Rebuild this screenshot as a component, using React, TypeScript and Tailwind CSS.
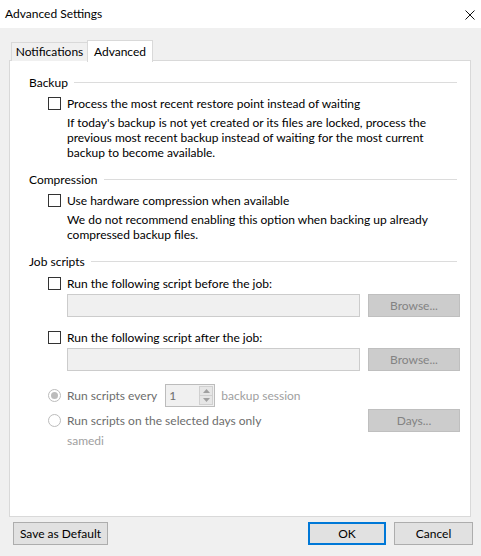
import React from 'react';

const FONT = 'font-["Lato","Liberation_Sans",sans-serif]';

function Checkbox() {
  return <span className="block h-[13px] w-[13px] flex-none border border-[#333333] bg-white" />;
}

function Radio({ checked }: { checked?: boolean }) {
  return (
    <span className="flex h-[13px] w-[13px] flex-none items-center justify-center rounded-full border border-[#bcbcbc] bg-white">
      {checked ? <span className="block h-[7px] w-[7px] rounded-full bg-[#bcbcbc]" /> : null}
    </span>
  );
}

function GroupHeader({ label, mt }: { label: string; mt: string }) {
  return (
    <div className={`${mt} flex h-[15px] items-center pl-[19px] pr-[13px]`}>
      <span className="leading-[15px] text-black">{label}</span>
      <span className="ml-[6px] h-px flex-1 bg-[#dcdcdc]" />
    </div>
  );
}

function Btn({ children, w, disabled, primary }: { children: React.ReactNode; w: string; disabled?: boolean; primary?: boolean }) {
  return (
    <div
      className={`${w} flex h-[23px] flex-none items-center justify-center ${
        disabled
          ? 'border border-[#bfbfbf] bg-[#cccccc] text-[#838383]'
          : primary
            ? 'border-2 border-[#0078d7] bg-[#e1e1e1] text-black'
            : 'border border-[#adadad] bg-[#e1e1e1] text-black'
      }`}
    >
      {children}
    </div>
  );
}

export default function App() {
  return (
    <div className={`${FONT} h-[556px] w-[481px] bg-[#f0f0f0] text-[12px] text-black`}>
      {/* title bar */}
      <div className="flex h-[28px] items-center justify-between bg-white pl-[5px] pr-[6px]">
        <span>Advanced Settings</span>
        <svg width="10" height="10" viewBox="0 0 10 10" className="mt-[1px]">
          <path d="M0.5 0.5 L9.5 9.5 M9.5 0.5 L0.5 9.5" stroke="#111" strokeWidth="1" />
        </svg>
      </div>

      <div className="pl-[9px] pr-[10px]">
        {/* tabs */}
        <div className="relative z-10 mt-[12px] flex h-[21px] items-end pl-[2px]">
          <div className="flex h-[19px] w-[77px] items-center justify-center border border-b-0 border-[#d9d9d9] bg-[#f0f0f0]">Notifications</div>
          <div className="-mb-px -ml-px flex h-[22px] w-[66px] items-start justify-center border border-b-0 border-[#d9d9d9] bg-white pt-[2px]">Advanced</div>
        </div>

        {/* panel */}
        <div className="-mt-px h-[457px] border border-[#d9d9d9] bg-white">
          <GroupHeader label="Backup" mt="mt-[14px]" />
          <div className="mt-[6px] flex h-[15px] items-center pl-[38px]">
            <Checkbox />
            <span className="ml-[6px] leading-[15px]">Process the most recent restore point instead of waiting</span>
          </div>
          <div className="mt-[4px] pl-[57px] leading-[15px]">
            If today's backup is not yet created or its files are locked, process the
            <br />
            previous most recent backup instead of waiting for the most current
            <br />
            backup to become available.
          </div>

          <GroupHeader label="Compression" mt="mt-[12px]" />
          <div className="mt-[6px] flex h-[15px] items-center pl-[38px]">
            <Checkbox />
            <span className="ml-[6px] leading-[15px]">Use hardware compression when available</span>
          </div>
          <div className="mt-[4px] pl-[57px] leading-[15px]">
            We do not recommend enabling this option when backing up already
            <br />
            compressed backup files.
          </div>

          <GroupHeader label="Job scripts" mt="mt-[12px]" />
          <div className="mt-[7px] flex h-[15px] items-center pl-[38px]">
            <Checkbox />
            <span className="ml-[6px] leading-[15px]">Run the following script before the job:</span>
          </div>
          <div className="mt-[3px] flex items-center pl-[57px]">
            <div className="h-[23px] w-[293px] border border-[#cccccc] bg-[#f0f0f0]" />
            <div className="ml-[8px]">
              <Btn w="w-[92px]" disabled>Browse...</Btn>
            </div>
          </div>
          <div className="mt-[13px] flex h-[15px] items-center pl-[38px]">
            <Checkbox />
            <span className="ml-[6px] leading-[15px]">Run the following script after the job:</span>
          </div>
          <div className="mt-[3px] flex items-center pl-[57px]">
            <div className="h-[23px] w-[293px] border border-[#cccccc] bg-[#f0f0f0]" />
            <div className="ml-[8px]">
              <Btn w="w-[92px]" disabled>Browse...</Btn>
            </div>
          </div>

          <div className="mt-[13px] flex h-[23px] items-center pl-[38px]">
            <Radio checked />
            <span className="ml-[6px] text-[#6d6d6d]">Run scripts every</span>
            <div className="ml-[8px] flex h-[23px] w-[50px] items-stretch border border-[#bcbcbc] bg-[#f0f0f0]">
              <span className="flex-1 pl-[3px] leading-[21px] text-[#6d6d6d]">1</span>
              <div className="my-[1px] mr-[1px] flex w-[14px] flex-col">
                <div className="flex flex-1 items-center justify-center border border-[#d0d0d0] bg-[#e6e6e6]">
                  <svg width="7" height="4" viewBox="0 0 7 4"><path d="M0 4 L3.5 0 L7 4 Z" fill="#a0a0a0" /></svg>
                </div>
                <div className="-mt-px flex flex-1 items-center justify-center border border-[#d0d0d0] bg-[#e6e6e6]">
                  <svg width="7" height="4" viewBox="0 0 7 4"><path d="M0 0 L3.5 4 L7 0 Z" fill="#a0a0a0" /></svg>
                </div>
              </div>
            </div>
            <span className="ml-[6px] text-[#a0a0a0]">backup session</span>
          </div>
          <div className="mt-[2px] flex h-[23px] items-center pl-[38px] pr-[10px]">
            <Radio />
            <span className="ml-[6px] flex-1 text-[#6d6d6d]">Run scripts on the selected days only</span>
            <Btn w="w-[92px]" disabled>Days...</Btn>
          </div>
          <div className="mt-[1px] pl-[57px] leading-[15px] text-[#a0a0a0]">samedi</div>
        </div>

        {/* footer */}
        <div className="-mr-[2px] mt-[5px] flex items-center pl-[4px]">
          <Btn w="w-[95px]">Save as Default</Btn>
          <div className="flex-1" />
          <Btn w="w-[78px]" primary>OK</Btn>
          <div className="ml-[8px]">
            <Btn w="w-[79px]">Cancel</Btn>
          </div>
        </div>
      </div>
    </div>
  );
}
